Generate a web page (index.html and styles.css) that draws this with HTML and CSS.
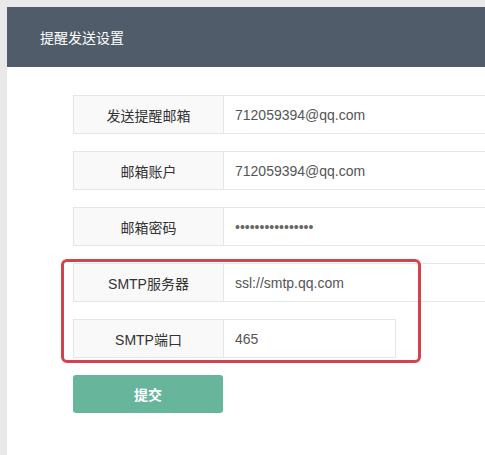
FILE: index.html
```html
<!DOCTYPE html>
<html lang="zh-CN">
<head>
  <meta charset="UTF-8" />
  <meta name="viewport" content="width=device-width, initial-scale=1.0" />
  <title>提醒发送设置</title>
  <link rel="stylesheet" href="styles.css">
</head>
<body>
  <div class="panel">
    <header class="panel-head">
      <h1>提醒发送设置</h1>
    </header>

    <form class="remind-form">
      <div class="field">
        <label class="field-label">发送提醒邮箱</label>
        <input class="field-input" type="text" value="712059394@qq.com" />
      </div>
      <div class="field">
        <label class="field-label">邮箱账户</label>
        <input class="field-input" type="text" value="712059394@qq.com" />
      </div>
      <div class="field">
        <label class="field-label">邮箱密码</label>
        <!-- masked value shown as bullets -->
        <input class="field-input pwd" type="text" value="••••••••••••••••" />
      </div>

      <div class="smtp-group">
        <div class="field">
          <label class="field-label">SMTP服务器</label>
          <input class="field-input" type="text" value="ssl://smtp.qq.com" />
        </div>
        <div class="field">
          <label class="field-label">SMTP端口</label>
          <input class="field-input short" type="text" value="465" />
        </div>
        <div class="mark"></div>
      </div>

      <button type="button" class="btn-submit">提交</button>
    </form>
  </div>
</body>
</html>
```

FILE: styles.css
```css
html, body {
  height: 100%;
}

body {
  margin: 0;
  background-color: #e9e9e9;
  font-family: "Liberation Sans", "Noto Sans CJK SC", sans-serif;
  overflow: hidden;
}

.panel {
  margin: 7px 0 0 7px;
  background-color: #fff;
  height: calc(100% - 7px);
}

.panel-head {
  background-color: #505c69;
  height: 60px;
  display: flex;
  align-items: center;
  padding-left: 33px;
}

.panel-head h1 {
  margin: 0;
  color: #fff;
  font-size: 14px;
  font-weight: normal;
  font-family: "Noto Sans CJK SC", sans-serif;
}

.remind-form {
  padding: 28px 0 0 66px;
}

.field {
  display: flex;
  height: 39px;
  margin-bottom: 17px;
}

.field-label {
  flex: none;
  width: 151px;
  box-sizing: border-box;
  border: 1px solid #e6e6e6;
  background-color: #f9f9f9;
  display: flex;
  align-items: center;
  justify-content: center;
  font-size: 14px;
  color: #333;
}

/* long inputs run on to the panel's right edge */
.field-input {
  flex: 1;
  min-width: 0;
  box-sizing: border-box;
  height: 39px;
  margin: 0;
  border: 1px solid #e6e6e6;
  border-left: none;
  border-right: none;
  padding: 0 11px;
  font-family: "Liberation Sans", sans-serif;
  font-size: 14px;
  color: #555;
  outline: none;
}

.field-input.short {
  flex: none;
  width: 172px;
  border-right: 1px solid #e6e6e6;
}

.field-input.pwd {
  color: #666;
}

.smtp-group {
  position: relative;
}

.mark {
  position: absolute;
  left: -12px;
  top: -4px;
  width: 360px;
  height: 104px;
  border: 3px solid #d3424f;
  border-radius: 6px;
  box-sizing: border-box;
}

.btn-submit {
  display: block;
  width: 150px;
  height: 38px;
  border: none;
  border-radius: 3px;
  background-color: #67b59a;
  color: #fff;
  font-size: 14px;
  font-weight: bold;
  font-family: "Noto Sans CJK SC", sans-serif;
  cursor: pointer;
}
```
